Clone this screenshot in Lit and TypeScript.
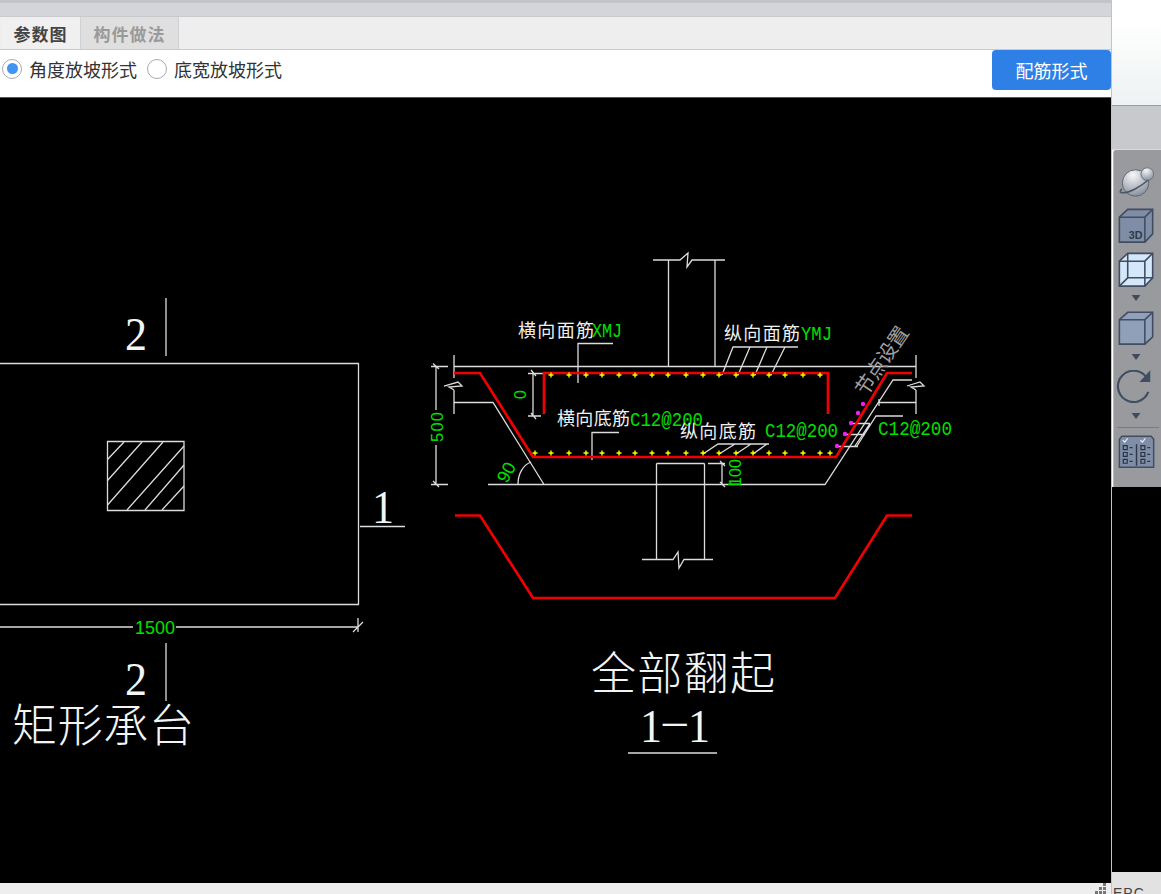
import { LitElement, html, css, svg } from "lit";
import { customElement } from "lit/decorators.js";

const topDots = [551,569,586,602,619,635,652,668,686,703,719,736,753,769,785,803,820];
const botDots = [535,551,569,586,602,619,635,652,668,686,703,719,736,753,769,785,803,820,830];
const magenta = [[863,404],[858,413],[851,423],[845,434],[837,446]];

const arrow = (m: string) => html`<svg class="ico h6 ${m}" viewBox="0 0 48 6"><path d="M18 0h9l-4.500 6z" fill="#3f4a5c"/></svg>`;
const cube = (m: string) => html`<svg class="ico h34 ${m}" viewBox="0 0 48 34">
  <path d="M5.500 8.500L14 1h25.500v25l-8 7.500H5.500z" fill="#8fa0b8" stroke="#414d60" stroke-width="1.600"/>
  <path d="M5.500 8.500h26v25M31.500 8.500l8-7.500" fill="none" stroke="#414d60" stroke-width="1.600"/>
</svg>`;
const plus = (x: number, y: number) => svg`<path class="y" d="M${x - 2.5} ${y - 0.7}h1.800v-1.800h1.400v1.800h1.800v1.400h-1.800v1.800h-1.400v-1.800h-1.800z"/>`;

@customElement("app-root")
export class AppRoot extends LitElement {
  static styles = css`
    :host { display: flex; width: 1161px; height: 894px; overflow: hidden; background: #fff;
      font-family: "Noto Sans CJK SC", "Liberation Sans", sans-serif; }
    .main { width: 1111px; display: flex; flex-direction: column; border-right: 1px solid #bcc4d2; }
    .band { height: 13px; border-top: 3px solid #c2c4c8; background: #d4d5da; }
    .tabs { height: 32px; display: flex; padding-left: 1px; background: #eeeeee;
      border-top: 1px solid #c8cacd; border-bottom: 1px solid #c8cacd; }
    .tab { display: flex; align-items: center; justify-content: center; font-size: 17px; font-weight: 700;
      letter-spacing: 1px; border-right: 1px solid #cfd1d4; }
    .tab.on { width: 79px; color: #444; background: #f0f0f0; }
    .tab.off { width: 97px; color: #9a9a9a; background: #dfdfdf; }
    .opts { height: 47px; flex: none; display: flex; align-items: flex-start; background: #fff;
      border-bottom: 1px solid #555; }
    .radio { display: flex; align-items: center; height: 37px; font-size: 18px; color: #333; line-height: 1; }
    .dot { width: 20px; height: 20px; border-radius: 50%; border: 1px solid #a9a9a9; background: #fff;
      display: flex; align-items: center; justify-content: center; box-sizing: border-box; }
    .dot.sel::after { content: ""; width: 11px; height: 11px; border-radius: 50%; background: #3f95f5; }
    .r1 { margin-left: 2px; gap: 7px; }
    .r2 { margin-left: 10px; gap: 7px; }
    .spacer { flex: 1; }
    .btn { width: 119px; height: 40px; background: #2e80e6; color: #fff; font-size: 18px; border-radius: 4px;
      display: flex; align-items: center; justify-content: center; }
    .canvas { flex: 1; background: #000; min-height: 0; }
    .canvas svg { display: block; width: 1111px; height: 785px; }
    .foot { height: 11px; flex: none; background: #eeeeee; display: flex; justify-content: flex-end; padding-right: 3px; }
    .side { flex: 1; display: flex; flex-direction: column; min-width: 0; }
    .glow { height: 105px; flex: none; background: linear-gradient(#ffffff 20%, #eef2f2); border-bottom: 1px solid #9a9c9e; }
    .grey { height: 43px; flex: none; background: #c7c9cc; border-bottom: 1px solid #d8dadc; }
    .panel { height: 322px; flex: none; margin-left: 1px; padding-top: 15px; background: #989a9e;
      border-left: 1px solid #b5b8bc; border-top-left-radius: 3px; display: flex; flex-direction: column; }
    .ico { display: block; width: 47px; flex: none; }
    .h6 { height: 6px; } .h32 { height: 32px; } .h33 { height: 33px; } .h34 { height: 34px; } .h35 { height: 35px; }
    .m7 { margin-top: 7px; } .m8 { margin-top: 8px; } .m9 { margin-top: 9px; } .m10 { margin-top: 10px; } .m11 { margin-top: 11px; }
    .sep { height: 1px; background: #7e7a78; margin: 8px 2px 0 3px; }
    .blk { height: 385px; flex: none; background: #000; }
    .tail { flex: 1; background: #e2e2e2; overflow: hidden; padding: 14px 0 0 1px; font: 14px/1 "Liberation Sans", sans-serif; color: #444; letter-spacing: 1px; }

    text { font-family: "Liberation Serif", "Noto Sans CJK SC", serif; fill: #fff; }
    .big { font-size: 45px; font-weight: 300; fill: #f2f5f5; }
    .num { font-size: 47px; fill: #f2f5f5; }
    .lab { font-family: "Noto Sans CJK SC", sans-serif; font-size: 18px; fill: #f0f0f0; }
    .grn { font-family: "Liberation Sans", sans-serif; font-size: 18px; fill: #00e000; }
    .mono { font-family: "Liberation Mono", monospace; font-size: 20px; fill: #00e000; }
    .node { font-family: "Noto Sans CJK SC", sans-serif; font-size: 20px; fill: #a0a0a0; }
    .ln { fill: none; stroke: #dcdcdc; stroke-width: 1.300; }
    .red { fill: none; stroke: #f00000; stroke-width: 2.700; }
    .y { fill: #ffff00; }
    .m { fill: #f020f0; }
    .g { fill: #00e000; }
  `;

  render() {
    return html`
      <div class="main">
        <div class="band"></div>
        <div class="tabs"><div class="tab on">参数图</div><div class="tab off">构件做法</div></div>
        <div class="opts">
          <div class="radio r1"><span class="dot sel"></span>角度放坡形式</div>
          <div class="radio r2"><span class="dot"></span>底宽放坡形式</div>
          <div class="spacer"></div>
          <div class="btn">配筋形式</div>
        </div>
        <div class="canvas">${this.drawing()}</div>
        <div class="foot">
          <svg width="14" height="11" viewBox="0 0 14 11" fill="#777">
            <rect x="9" y="0" width="3" height="3"/><rect x="5" y="4" width="3" height="3"/><rect x="9" y="4" width="3" height="3"/>
            <rect x="1" y="8" width="3" height="3"/><rect x="5" y="8" width="3" height="3"/><rect x="9" y="8" width="3" height="3"/>
          </svg>
        </div>
      </div>
      <div class="side">
        <div class="glow"></div>
        <div class="grey"></div>
        <div class="panel">
          <svg class="ico h32" viewBox="0 0 48 32">
            <defs>
              <radialGradient id="pl" cx="0.4" cy="0.2" r="0.9"><stop offset="0" stop-color="#f6f7f8"/><stop offset="0.55" stop-color="#b4bac3"/><stop offset="1" stop-color="#7a8390"/></radialGradient>
            </defs>
            <circle cx="22" cy="18" r="13.500" fill="url(#pl)" stroke="#5c6572" stroke-width="1"/>
            <circle cx="34" cy="9" r="6.500" fill="url(#pl)" stroke="#6c7480" stroke-width="1"/>
            <path d="M8 24c-3 3-2 4 1 4 7 0 18-6 26-13" fill="none" stroke="#4d5665" stroke-width="1.600"/>
          </svg>
          <svg class="ico h35 m11" viewBox="0 0 48 35">
            <path d="M5.500 9L14 1h25.500v25l-8 8.500H5.500z" fill="#7f8ea6" stroke="#414d60" stroke-width="1.600"/>
            <path d="M5.500 9h26v25.500M31.500 9l8-8" fill="none" stroke="#414d60" stroke-width="1.600"/>
            <text x="15" y="31" style="font:bold 11px 'Liberation Sans',sans-serif;fill:#2f3948">3D</text>
          </svg>
          <svg class="ico h35 m9" viewBox="0 0 48 35">
            <path d="M5.500 9L14 1h25.500v25l-8 8.500H5.500z" fill="#d3e8fb" stroke="#414d60" stroke-width="1.600"/>
            <path d="M5.500 9h26v25.500M31.500 9l8-8M5.500 34.500L14 26h25.500M14 1v25" fill="none" stroke="#414d60" stroke-width="1.600"/>
          </svg>
          ${arrow("m8")}
          ${cube("m10")}
          ${arrow("m9")}
          <svg class="ico h33 m10" viewBox="0 0 48 33">
            <path d="M33 7A16 16 0 1 0 35 22" fill="none" stroke="#414d60" stroke-width="2.200"/>
            <path d="M37 0v12H26z" fill="#414d60"/>
          </svg>
          ${arrow("m10")}
          <div class="sep"></div>
          <svg class="ico h33 m7" viewBox="0 0 48 33">
            <path d="M5.500 4L8 1h30l2.500 3v28.500h-35z" fill="#7f8ea6" stroke="#414d60" stroke-width="1.500"/>
            <path d="M23 9v22" stroke="#2f3948" stroke-width="1.500"/>
            <g fill="none" stroke="#2a3342" stroke-width="1.200">
              <path d="M9 5l2 2 3-4M27 5l2 2 3-4" stroke="#e6edf4"/>
              <path d="M9.500 10.500h4v4h-4zM9.500 17.500h4v4h-4zM9.500 24.500h4v4h-4zM27.500 10.500h4v4h-4zM27.500 17.500h4v4h-4zM27.500 24.500h4v4h-4z"/>
              <path d="M16 12.500h3M16 19.500h3M16 26.500h3M34 12.500h3M34 19.500h3M34 26.500h3"/>
            </g>
          </svg>
        </div>
        <div class="blk"></div>
        <div class="tail">EPC</div>
      </div>
    `;
  }

  drawing() {
    return html`<svg viewBox="0 98 1111 785">
      <!-- left plan -->
      <path class="ln" d="M0 363.500H358.500V604.500H0"/>
      <path class="ln" d="M107.500 441.500H184V510.500H107.500z"/>
      <path class="ln" d="M107.500 459.500L124 442M107.500 480.500L142 442M107.500 505L163 442M127 510L184 446M145 510L184 465M162 510L184 486"/>
      <path class="ln" d="M166 298V356M166 643V701M360 526.500H405M0 627H133M176 627H358M358 618V632M353 632L363 622"/>
      <text class="num" x="125" y="350" textLength="22" lengthAdjust="spacingAndGlyphs">2</text>
      <text class="num" x="125" y="695" textLength="22" lengthAdjust="spacingAndGlyphs">2</text>
      <text class="num" x="372" y="523" textLength="22" lengthAdjust="spacingAndGlyphs">1</text>
      <text class="grn" style="font-size:19px" x="135" y="634" textLength="40" lengthAdjust="spacingAndGlyphs">1500</text>
      <text class="big" x="12" y="742" textLength="182">矩形承台</text>

      <!-- section outline -->
      <path class="ln" d="M454 366.500H916M668.500 260V366M715 260V366"/>
      <path class="ln" d="M653 260H680L688 253L687 267L692 260H725"/>
      <path class="ln" d="M454 355V378M454 390V414M444 386L458 382L462 386L449 387L454 390"/>
      <path class="ln" d="M916 355V378M916 390V414M907 386L920 382L924 386L911 387L916 390"/>
      <path class="ln" d="M454 402.500H493L544 484.500M488 484.500H825L893 380H912M878 402.500H916"/>
      <path class="ln" d="M518 484C518 474 523 465 531 462"/>
      <path class="ln" d="M436 366V410M436 445V484M431 366.500H448M431 484.500H448M433 363.500L439 369M433 481L439 487"/>
      <path class="ln" d="M533 373V416M528 373.500H543M528 416H541M531 370L536 376M531 413L536 419"/>
      <!-- column below -->
      <path class="ln" d="M656.500 463.500H704.500M656.500 463.500V559M704.500 463.500V559"/>
      <path class="ln" d="M642 559.500H673L678 552L679 568L684 559.500H713"/>
      <path class="ln" d="M708 463.500H725M722 463.500V484M720 461L725 466M720 482L725 487"/>

      <!-- leaders -->
      <path class="ln" d="M578 383V343.500H613"/>
      <path class="ln" d="M592 460V432.500H619"/>
      <path class="ln" d="M798 347H733L722 375M750 347L738 375M767 347L755 375M785 347L771 375"/>
      <path class="ln" d="M769 444H718L703 454M735 444L719 454M751 444L736 454M767 444L753 454"/>
      <path class="ln" d="M903 416H876L857 446M852 423.500H870M845 434.500H865M837 446.500H858M870 423.500L855 446M879 399V406"/>

      <!-- rebar -->
      <path class="red" d="M454 373H480L533 457H836L887 373H912"/>
      <path class="red" d="M544 414V373H828V414"/>
      ${topDots.map((x) => plus(x, 375))}
      ${botDots.map((x) => plus(x, 453))}
      ${magenta.map(([x, y]) => svg`<circle class="m" cx=${x} cy=${y} r="2.200"/>`)}
      <path class="red" d="M455 515.500H480L533 598H835L887 515.500H912"/>

      <!-- labels -->
      <text class="lab" x="518" y="337" textLength="76">横向面筋</text>
      <text class="mono" x="592" y="337" textLength="30" lengthAdjust="spacingAndGlyphs">XMJ</text>
      <text class="lab" x="557" y="425" textLength="73">横向底筋</text>
      <text class="mono" x="630" y="426" textLength="73" lengthAdjust="spacingAndGlyphs">C12@200</text>
      <text class="lab" x="724" y="340" textLength="76">纵向面筋</text>
      <text class="mono" x="801" y="340" textLength="31" lengthAdjust="spacingAndGlyphs">YMJ</text>
      <text class="lab" x="680" y="438" textLength="76">纵向底筋</text>
      <text class="mono" x="765" y="437" textLength="73" lengthAdjust="spacingAndGlyphs">C12@200</text>
      <text class="mono" x="878" y="435" textLength="74" lengthAdjust="spacingAndGlyphs">C12@200</text>
      <text class="node" transform="translate(866 397) rotate(-56)" textLength="78">节点设置</text>
      <text class="grn" style="font-size:16.500px" transform="translate(443 442) rotate(-90)" textLength="30">500</text>
      <text class="grn" style="font-size:16px" transform="translate(526 399) rotate(-90)">0</text>
      <text class="grn" style="font-size:16px" transform="translate(741 486) rotate(-90)" textLength="27">100</text>
      <rect class="g" x="728" y="483.500" width="13" height="1.500"/>
      <text class="grn" style="font-size:18px" transform="translate(507 484) rotate(-62)">90</text>

      <text class="big" x="591" y="690" textLength="184">全部翻起</text>
      <text class="num" x="640" y="742" textLength="22" lengthAdjust="spacingAndGlyphs">1</text>
      <text class="num" x="663" y="736" textLength="22">–</text>
      <text class="num" x="688" y="742" textLength="22" lengthAdjust="spacingAndGlyphs">1</text>
      <path class="ln" d="M628 753H717"/>
    </svg>`;
  }
}
